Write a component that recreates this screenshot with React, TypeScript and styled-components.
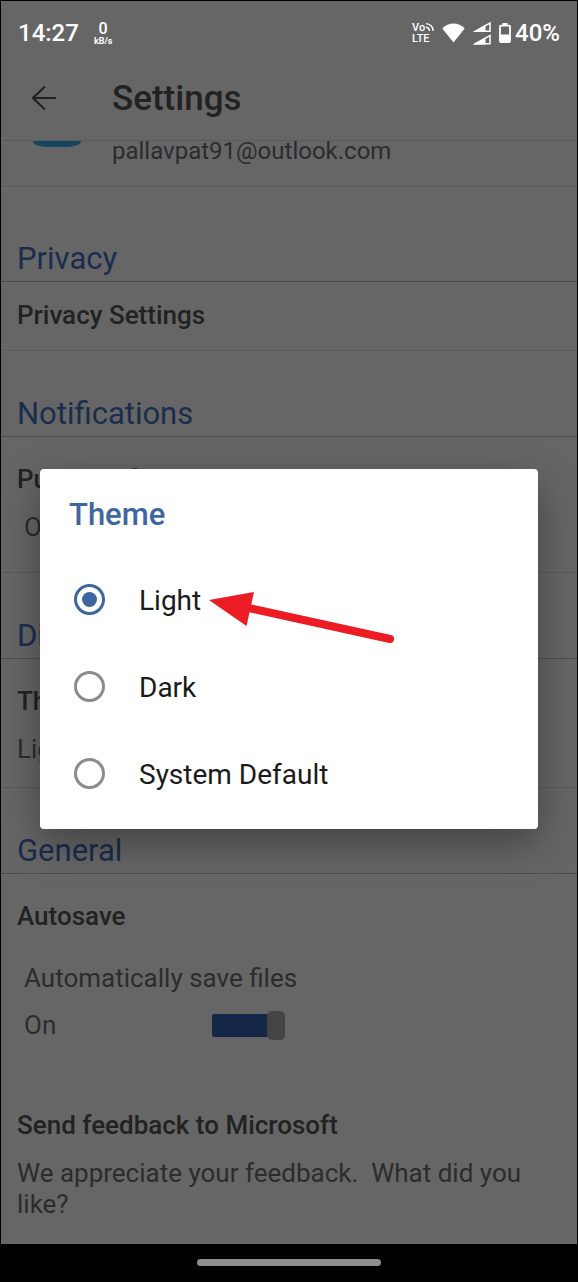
import React, { useState } from "react";
import styled, { createGlobalStyle } from "styled-components";

const color = {
  surface: "#666666",
  ink: "#222222",
  text: "#2c2c2c",
  accent: "#1a2d4d",
  accentBright: "#3e669f",
  ruleStrong: "#4e4e4e",
  rule: "#5b5b5b",
};

const GlobalStyle = createGlobalStyle`
  * { box-sizing: border-box; }
  body {
    margin: 0;
    background: #000;
    font-family: Roboto, "Liberation Sans", sans-serif;
  }
  h1, h2, h3, p { margin: 0; }
`;

const Phone = styled.div`
  position: relative;
  display: flex;
  flex-direction: column;
  min-height: 100vh;
  border: 1px solid #000;
  border-bottom: 0;
  background: ${color.surface};
`;

const StatusBar = styled.div`
  display: flex;
  align-items: center;
  justify-content: space-between;
  height: 57px;
  padding: 7px 17px 0;
  color: #fff;
  font-size: 24px;
  line-height: 28px;
  font-weight: 500;
`;

const StatusGroup = styled.div<{ $gap: number }>`
  display: flex;
  align-items: center;
  gap: ${(p) => p.$gap}px;
`;

const NetSpeed = styled.div`
  display: flex;
  flex-direction: column;
  align-items: center;
  font-size: 9px;
  line-height: 9px;
  font-weight: 700;
`;

const NetValue = styled.span`
  font-size: 16px;
  line-height: 16px;
  font-weight: 500;
`;

const BatteryLevel = styled.div`
  display: flex;
  align-items: center;
  gap: 4px;
`;

const AppBar = styled.header`
  display: flex;
  align-items: center;
  gap: 53px;
  height: 83px;
  padding: 0 28px;
  border-bottom: 1px solid ${color.rule};
`;

const BackButton = styled.button`
  display: flex;
  padding: 0;
  border: 0;
  background: none;
  color: ${color.ink};
`;

const Title = styled.h1`
  color: ${color.ink};
  font-size: 35px;
  line-height: 42px;
  font-weight: 500;
`;

const Main = styled.main`
  flex: 1;
`;

const Account = styled.section`
  display: flex;
  align-items: flex-start;
  gap: 31px;
  margin-bottom: 9px;
  padding: 0 32px 25px;
  border-bottom: 1px solid ${color.rule};
`;

const AvatarEdge = styled.span`
  width: 48px;
  height: 6px;
  border-radius: 0 0 14px 14px / 0 0 6px 6px;
  background: #154560;
`;

const Email = styled.p`
  color: ${color.text};
  font-size: 24px;
  line-height: 20px;
`;

const SectionTitle = styled.h2`
  display: flex;
  align-items: flex-end;
  height: 86px;
  padding: 0 16px 4px;
  border-bottom: 1px solid ${color.ruleStrong};
  color: ${color.accent};
  font-size: 31px;
  line-height: 36px;
  font-weight: 400;
`;

const Setting = styled.section<{ $top?: number; $bottom: number; $last?: boolean }>`
  display: flex;
  flex-direction: column;
  gap: 18px;
  padding: ${(p) => p.$top ?? 27}px 16px ${(p) => p.$bottom}px;
  border-bottom: ${(p) => (p.$last ? 0 : 1)}px solid ${color.rule};
`;

const SettingName = styled.h3`
  color: ${color.ink};
  font-size: 26px;
  line-height: 30px;
  font-weight: 500;
`;

const SettingText = styled.p`
  color: ${color.text};
  font-size: 26px;
  line-height: 31px;
  white-space: pre-wrap;
`;

const SwitchBlock = styled.div<{ $top?: number }>`
  display: flex;
  flex-direction: column;
  gap: 16px;
  padding: ${(p) => p.$top ?? 0}px 0 0 7px;
`;

const SwitchLabel = styled.label`
  display: grid;
  grid-template-columns: 188px auto;
  align-items: center;
  justify-content: start;
  color: ${color.text};
  font-size: 26px;
  line-height: 31px;
`;

const Switch = styled.input`
  display: flex;
  align-items: center;
  justify-content: flex-end;
  appearance: none;
  width: 73px;
  height: 23px;
  margin: 0;
  border-radius: 2px;
  background: #152747;

  &::before {
    content: "";
    width: 18px;
    height: 29px;
    flex: none;
    border-radius: 5px;
    background: #444444;
  }

  &:not(:checked) {
    justify-content: flex-start;
    background: #505050;
  }
`;

const NavBar = styled.footer`
  display: flex;
  align-items: center;
  justify-content: center;
  height: 38px;
  padding-bottom: 2px;
  background: #000;
`;

const HomeHandle = styled.span`
  width: 184px;
  height: 7px;
  border-radius: 4px;
  background: #8e8e8e;
`;

const Overlay = styled.div`
  position: absolute;
  inset: 0;
  display: flex;
  align-items: center;
  padding: 54px 39px 40px;
`;

const Dialog = styled.form`
  position: relative;
  flex: 1;
  padding: 28px 29px 12px;
  border-radius: 4px;
  background: #fff;
  box-shadow: 0 14px 40px rgba(0, 0, 0, 0.36);
`;

const DialogTitle = styled.h2`
  margin-bottom: 23px;
  color: ${color.accentBright};
  font-size: 31px;
  line-height: 36px;
  font-weight: 500;
`;

const Option = styled.label`
  display: flex;
  align-items: center;
  gap: 34px;
  height: 87px;
  padding-left: 5px;
  color: #1b1b1b;
  font-size: 28px;
  line-height: 32px;
`;

const OptionText = styled.span`
  padding-top: 4px;
`;

const Radio = styled.input`
  display: grid;
  place-items: center;
  appearance: none;
  width: 31px;
  height: 31px;
  margin: 0;
  border: 3px solid #8c8c8c;
  border-radius: 50%;

  &:checked {
    border-color: ${color.accentBright};
  }

  &:checked::before {
    content: "";
    width: 15px;
    height: 15px;
    border-radius: 50%;
    background: ${color.accentBright};
  }
`;

const Pointer = styled.svg`
  position: absolute;
  top: 120px;
  left: 169px;
  pointer-events: none;
`;

const VoLteBadge = styled.div`
  position: relative;
  display: flex;
  flex-direction: column;
  width: 22px;
  font-size: 11px;
  line-height: 11px;
  font-weight: 500;
`;

const VoiceWaves = styled.svg`
  position: absolute;
  top: 0;
  right: 0;
`;

const VoLteIcon = () => (
  <VoLteBadge>
    <span>Vo</span>
    <span>LTE</span>
    <VoiceWaves width="8" height="10" viewBox="0 0 8 10" fill="none" stroke="#fff" strokeWidth="1.4" aria-hidden="true">
      <path d="M0 5.2a4 4 0 0 1 3.500 3.8" />
      <path d="M0 1.600a7.400 7.400 0 0 1 7.200 7.400" />
    </VoiceWaves>
  </VoLteBadge>
);

const WifiIcon = () => (
  <svg width="23" height="20" viewBox="0 0 23 20" fill="#fff" aria-hidden="true">
    <path d="M11.5 19.5 0.3 5.4C3.4 2.2 7.3 0.6 11.5 0.6s8.1 1.6 11.2 4.8z" />
  </svg>
);

const SignalIcon = () => (
  <svg width="18" height="24" viewBox="0 0 18 24" fill="none" stroke="#fff" strokeWidth="1.5" aria-hidden="true">
    <path d="M2.5 10.2 17 2v8.2z" />
    <path d="M0 11 12.5 4V11z" fill="#fff" stroke="none" />
    <path d="M2.5 22.7 17 14.5v8.2z" />
    <path d="M0 23.5 12.5 16.5v7z" fill="#fff" stroke="none" />
  </svg>
);

const BatteryIcon = () => (
  <svg width="12" height="20" viewBox="0 0 12 20" aria-hidden="true">
    <path d="M3.5 0h5v2h-5z" fill="#fff" />
    <rect x="1" y="2.6" width="10" height="16.4" rx="1" fill="none" stroke="#fff" strokeWidth="1.8" />
    <path d="M1 11.5h10V19H1z" fill="#fff" />
  </svg>
);

const BackIcon = () => (
  <svg width="30" height="30" viewBox="0 0 30 30" fill="none" stroke="currentColor" strokeWidth="2.2" aria-hidden="true">
    <path d="M27 14H4M16 2.5 4 14l12 11.5" />
  </svg>
);

const themes = ["Light", "Dark", "System Default"];

export default function App() {
  const [theme, setTheme] = useState("Light");
  const [push, setPush] = useState(true);
  const [autosave, setAutosave] = useState(true);

  return (
    <>
      <GlobalStyle />
      <Phone>
        <StatusBar>
          <StatusGroup $gap={15}>
            <span>14:27</span>
            <NetSpeed>
              <NetValue>0</NetValue>
              <span>kB/s</span>
            </NetSpeed>
          </StatusGroup>
          <StatusGroup $gap={8}>
            <VoLteIcon />
            <WifiIcon />
            <SignalIcon />
            <BatteryLevel>
              <BatteryIcon />
              <span>40%</span>
            </BatteryLevel>
          </StatusGroup>
        </StatusBar>

        <AppBar>
          <BackButton type="button" aria-label="Back">
            <BackIcon />
          </BackButton>
          <Title>Settings</Title>
        </AppBar>

        <Main>
          <Account>
            <AvatarEdge />
            <Email>pallavpat91@outlook.com</Email>
          </Account>

          <SectionTitle>Privacy</SectionTitle>
          <Setting $top={18} $bottom={20}>
            <SettingName>Privacy Settings</SettingName>
          </Setting>

          <SectionTitle>Notifications</SectionTitle>
          <Setting $bottom={29}>
            <SettingName>Push notifications</SettingName>
            <SwitchBlock>
              <SwitchLabel>
                {push ? "On" : "Off"}
                <Switch type="checkbox" role="switch" checked={push} onChange={(e) => setPush(e.target.checked)} />
              </SwitchLabel>
            </SwitchBlock>
          </Setting>

          <SectionTitle>Display</SectionTitle>
          <Setting $bottom={22}>
            <SettingName>Theme</SettingName>
            <SettingText>{theme}</SettingText>
          </Setting>

          <SectionTitle>General</SectionTitle>
          <Setting $bottom={42} $last>
            <SettingName>Autosave</SettingName>
            <SwitchBlock $top={14}>
              <SettingText>Automatically save files</SettingText>
              <SwitchLabel>
                {autosave ? "On" : "Off"}
                <Switch type="checkbox" role="switch" checked={autosave} onChange={(e) => setAutosave(e.target.checked)} />
              </SwitchLabel>
            </SwitchBlock>
          </Setting>
          <Setting $bottom={24} $last>
            <SettingName>Send feedback to Microsoft</SettingName>
            <SettingText>{"We appreciate your feedback.  What did you like?"}</SettingText>
          </Setting>
        </Main>

        <NavBar>
          <HomeHandle />
        </NavBar>

        <Overlay>
          <Dialog role="dialog" aria-labelledby="theme-title">
            <DialogTitle id="theme-title">Theme</DialogTitle>
            {themes.map((name) => (
              <Option key={name}>
                <Radio type="radio" name="theme" checked={theme === name} onChange={() => setTheme(name)} />
                <OptionText>{name}</OptionText>
              </Option>
            ))}
            <Pointer width="190" height="60" viewBox="0 0 190 60" aria-hidden="true">
              <path d="M40 19 181 50" stroke="#ec1c24" strokeWidth="8" strokeLinecap="round" />
              <path d="M0 11 45 3 37.500 37z" fill="#ec1c24" />
            </Pointer>
          </Dialog>
        </Overlay>
      </Phone>
    </>
  );
}
